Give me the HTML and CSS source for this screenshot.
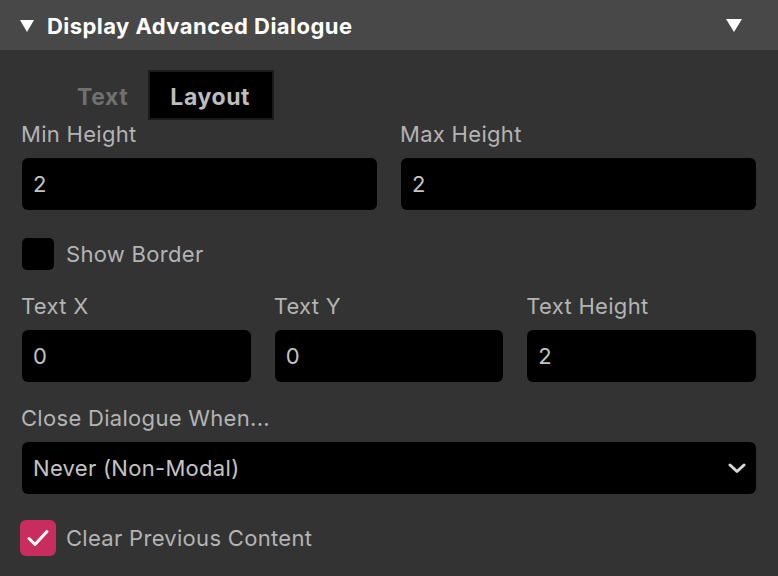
FILE: index.html
```html
<!DOCTYPE html>
<html>
<head>
<meta charset="utf-8">
<link rel="stylesheet" href="styles.css">
</head>
<body>
<div class="panel">
  <div class="header">
    <div class="title">
      <svg class="tri" width="14" height="12" viewBox="0 0 14 12"><polygon points="0,0 14,0 7,12" fill="#fff"/></svg>
      <span>Display Advanced Dialogue</span>
    </div>
    <svg class="tri" width="16" height="13" viewBox="0 0 16 13"><polygon points="0,0 16,0 8,13" fill="#fff"/></svg>
  </div>
  <div class="content">
    <div class="tabs">
      <div class="tab">Text</div>
      <div class="tab active">Layout</div>
    </div>
    <div class="grid two">
      <div class="field">
        <div class="label">Min Height</div>
        <div class="input">2</div>
      </div>
      <div class="field">
        <div class="label">Max Height</div>
        <div class="input">2</div>
      </div>
    </div>
    <div class="check-row">
      <div class="box"></div>
      <span class="check-label">Show Border</span>
    </div>
    <div class="grid three">
      <div class="field">
        <div class="label">Text X</div>
        <div class="input">0</div>
      </div>
      <div class="field">
        <div class="label">Text Y</div>
        <div class="input">0</div>
      </div>
      <div class="field">
        <div class="label">Text Height</div>
        <div class="input">2</div>
      </div>
    </div>
    <div class="field close-field">
      <div class="label">Close Dialogue When...</div>
      <div class="input select">
        <span>Never (Non-Modal)</span>
        <svg width="18" height="12" viewBox="0 0 18 12"><polyline points="2,3 9,9.5 16,3" fill="none" stroke="#d8d8d8" stroke-width="3" stroke-linecap="round" stroke-linejoin="round"/></svg>
      </div>
    </div>
    <div class="check-row checked-row">
      <div class="box checked">
        <svg width="36" height="36" viewBox="0 0 36 36"><polyline points="9,18.5 15,24.5 27,11.5" fill="none" stroke="#fff" stroke-width="3" stroke-linecap="round" stroke-linejoin="round"/></svg>
      </div>
      <span class="check-label">Clear Previous Content</span>
    </div>
  </div>
</div>
</body>
</html>
```
FILE: styles.css
```css
html, body {
  margin: 0;
  padding: 0;
  background: #333333;
}
body {
  width: 778px;
  height: 576px;
  overflow: hidden;
  font-family: Inter, "Open Sans", sans-serif;
}
.panel {
  display: flex;
  flex-direction: column;
}
.header {
  height: 50px;
  background: #484848;
  display: flex;
  align-items: center;
  justify-content: space-between;
  padding: 0 36px 0 20px;
}
.title {
  display: flex;
  align-items: center;
  gap: 13px;
  color: #ffffff;
  font-weight: 700;
  font-size: 22px;
  letter-spacing: 0.45px;
  line-height: 28px;
  padding-top: 2px;
}
.tri { display: block; }
.content {
  padding: 20px 22px 0 22px;
  display: flex;
  flex-direction: column;
}
.tabs {
  display: flex;
  height: 50px;
  margin-left: 33px;
}
.tab {
  box-sizing: border-box;
  height: 50px;
  padding: 3px 20px 0 22px;
  display: flex;
  align-items: center;
  font-size: 23px;
  font-weight: 700;
  letter-spacing: 0.6px;
  color: #707070;
}
.tab.active {
  background: #000;
  border: 2px solid #1b1b1b;
  padding: 3px 22px 0 20px;
  color: #bdbdbd;
}
.grid {
  display: grid;
  column-gap: 24px;
}
.grid.two { grid-template-columns: 1fr 1fr; }
.grid.three { grid-template-columns: 1fr 1fr 1fr; }
.field {
  display: flex;
  flex-direction: column;
}
.label {
  height: 28px;
  line-height: 28px;
  margin-left: -1px;
  margin-bottom: 10px;
  font-size: 22px;
  letter-spacing: 0.3px;
  color: #b4b4b4;
}
.input {
  box-sizing: border-box;
  height: 52px;
  background: #000;
  border-radius: 6px;
  padding: 0 11px;
  display: flex;
  align-items: center;
  font-size: 22px;
  letter-spacing: 0.3px;
  color: #c4c4c4;
}
.select {
  justify-content: space-between;
  padding-right: 10px;
}
.select svg { display: block; }
.close-field {
  margin-top: 22px;
}
.check-row {
  display: flex;
  align-items: center;
  gap: 12px;
  height: 32px;
  margin: 28px 0 22px 0;
}
.box {
  width: 32px;
  height: 32px;
  background: #000;
  border-radius: 5px;
}
.check-label {
  font-size: 22px;
  letter-spacing: 0.3px;
  color: #b4b4b4;
}
.checked-row {
  height: 36px;
  margin: 26px 0 0 -2px;
  gap: 10px;
}
.box.checked {
  width: 36px;
  height: 36px;
  border-radius: 6px;
  background: #c92d60;
}
.box.checked svg { display: block; }
```
